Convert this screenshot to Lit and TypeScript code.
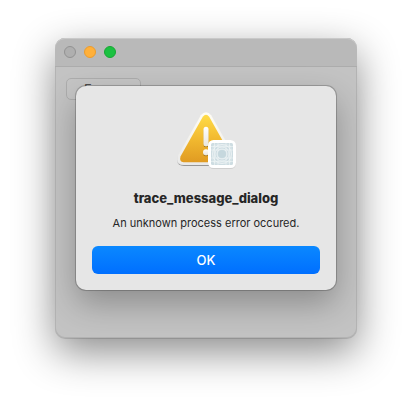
import { LitElement, html, css, svg } from "lit";
import { customElement, property } from "lit/decorators.js";

@customElement("warning-icon")
class WarningIcon extends LitElement {
  static styles = css`
    :host {
      display: block;
      width: 64px;
      height: 64px;
    }
    .art {
      display: block;
      width: 100%;
      height: 100%;
      overflow: visible;
    }
  `;

  render() {
    const lines = [6.5, 10, 18, 21.5];
    return html`
      <svg class="art" viewBox="0 0 64 64" role="img" aria-label="Warning">
        <defs>
          <linearGradient id="amber" x1="0" y1="0" x2="0" y2="1">
            <stop offset="0" stop-color="#ffdc48" />
            <stop offset="0.5" stop-color="#f2ba30" />
            <stop offset="1" stop-color="#e09b22" />
          </linearGradient>
          <linearGradient id="rim" x1="0" y1="0" x2="0" y2="1">
            <stop offset="0" stop-color="#fffdf4" />
            <stop offset="1" stop-color="#e9e9e9" />
          </linearGradient>
          <linearGradient id="mark" x1="0" y1="0" x2="0" y2="1">
            <stop offset="0" stop-color="#ffffff" />
            <stop offset="1" stop-color="#e9e6de" />
          </linearGradient>
          <filter id="drop" x="-20%" y="-20%" width="140%" height="140%">
            <feDropShadow dx="0" dy="1" stdDeviation="0.7" flood-opacity="0.35" />
          </filter>
          <filter id="soft" x="-20%" y="-20%" width="140%" height="140%">
            <feDropShadow dx="0" dy="0.5" stdDeviation="0.6" flood-opacity="0.2" />
          </filter>
        </defs>
        <path
          d="M26.800 9.200Q32 3.200 37.200 9.200L60 49.500Q63 58.800 54 59H10Q1 58.800 4 49.500Z"
          fill="url(#rim)"
          filter="url(#drop)"
        />
        <path
          d="M28.800 10.800Q32 6.800 35.200 10.800L57.500 50.500Q59 55.800 54.500 56.200H9.500Q5 55.800 6.500 50.500Z"
          fill="url(#amber)"
        />
        <rect x="29.500" y="20.800" width="5" height="19.400" rx="2.500" fill="url(#mark)" filter="url(#drop)" />
        <circle cx="32" cy="46.300" r="3" fill="url(#mark)" filter="url(#drop)" />
        <g transform="translate(34 34)">
          <rect width="28" height="28" rx="5.500" fill="#fff" filter="url(#soft)" />
          <rect x="3" y="3" width="22" height="22" rx="1.500" fill="#cedde2" />
          <g fill="none" stroke="#f2f7f8" stroke-width="0.7">
            ${lines.map(
              (p) => svg`<path d="M${p} 3V25M3 ${p}H25" opacity="0.8" />`
            )}
            <rect x="5" y="5" width="18" height="18" rx="3" opacity="0.6" />
            <ellipse cx="14" cy="14" rx="9.500" ry="9.500" />
            <circle cx="14" cy="14" r="7" />
            <circle cx="14" cy="14" r="5" />
          </g>
          <circle cx="14" cy="14" r="4" fill="#c6d8de" />
        </g>
      </svg>
    `;
  }
}

@customElement("alert-dialog")
class AlertDialog extends LitElement {
  @property() heading = "";
  @property() message = "";

  static styles = css`
    :host {
      display: block;
    }
    .panel {
      box-sizing: border-box;
      display: flex;
      flex-direction: column;
      align-items: center;
      padding: 20px 16px 16px;
      border-radius: 10px;
      background: #e6e6e6;
      color: #262626;
      box-shadow:
        0 0 0 1px rgba(0, 0, 0, 0.16),
        0 0 1px 1px rgba(0, 0, 0, 0.06),
        0 14px 32px rgba(0, 0, 0, 0.28);
      text-align: center;
    }
    .heading {
      margin: 20px 0 0;
      font-size: 13px;
      line-height: 16px;
      font-weight: 800;
    }
    .message {
      margin: 10px 0 0;
      font-size: 11px;
      line-height: 14px;
    }
    .ok {
      width: 100%;
      height: 28px;
      margin-top: 16px;
      padding: 0;
      border: 0;
      border-radius: 6px;
      background: linear-gradient(#0a88ff, #006fff);
      color: #fff;
      font: 500 13px/26px Inter, "Liberation Sans", sans-serif;
    }
  `;

  render() {
    return html`
      <section class="panel" role="alertdialog" aria-labelledby="heading" aria-describedby="message">
        <warning-icon></warning-icon>
        <h1 class="heading" id="heading">${this.heading}</h1>
        <p class="message" id="message">${this.message}</p>
        <button class="ok" type="button">OK</button>
      </section>
    `;
  }
}

@customElement("app-root")
class AppRoot extends LitElement {
  static styles = css`
    :host {
      display: flex;
      box-sizing: border-box;
      min-height: 100vh;
      padding: 38px 55px 74px;
      background: #fff;
      font-family: Inter, "Liberation Sans", sans-serif;
      overflow: hidden;
    }
    .window {
      position: relative;
      box-sizing: border-box;
      flex: 1;
      display: flex;
      flex-direction: column;
      border-radius: 10px;
      background: #c3c3c3;
      box-shadow:
        inset 0 0 0 1px rgba(0, 0, 0, 0.08),
        0 1px 0 rgba(0, 0, 0, 0.12),
        0 14px 40px rgba(0, 0, 0, 0.46);
    }
    .titlebar {
      box-sizing: border-box;
      display: flex;
      align-items: center;
      gap: 8px;
      height: 29px;
      padding: 0 9px;
      border-bottom: 1px solid #acacac;
      border-radius: 10px 10px 0 0;
      background: #b9b9b9;
      box-shadow: inset 0 1px #c9c9c9;
    }
    .light {
      box-sizing: border-box;
      width: 12px;
      height: 12px;
      padding: 0;
      border: 1px solid #929292;
      border-radius: 50%;
      background: #afafaf;
    }
    .minimize {
      border-color: #ec9c2c;
      background: #ffb03a;
    }
    .zoom {
      border-color: #18a733;
      background: #1bc141;
    }
    .content {
      flex: 1;
      padding: 11px;
    }
    .trigger {
      box-sizing: border-box;
      width: 75px;
      height: 22px;
      padding: 0 17px;
      border: 1px solid #adadad;
      border-radius: 5px;
      background: #c5c5c5;
      color: #4c4c4c;
      font: 13px/16px Inter, "Liberation Sans", sans-serif;
      text-align: left;
    }
    .dialog {
      position: absolute;
      top: 48px;
      left: 21px;
      right: 21px;
    }
  `;

  render() {
    return html`
      <main class="window">
        <header class="titlebar">
          <button class="light" type="button" aria-label="Close"></button>
          <button class="light minimize" type="button" aria-label="Minimize"></button>
          <button class="light zoom" type="button" aria-label="Zoom"></button>
        </header>
        <div class="content">
          <button class="trigger" type="button">Error</button>
        </div>
        <alert-dialog
          class="dialog"
          heading="trace_message_dialog"
          message="An unknown process error occured."
        ></alert-dialog>
      </main>
    `;
  }
}
